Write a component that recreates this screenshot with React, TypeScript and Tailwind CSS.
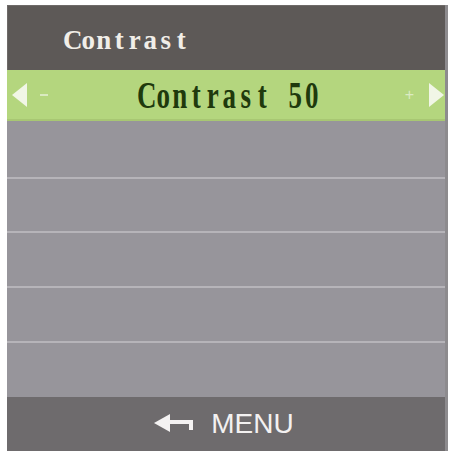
import React from "react";

const serif = { fontFamily: '"Liberation Serif", "Times New Roman", serif' };
const sans = { fontFamily: '"Liberation Sans", Arial, sans-serif' };

// Fixed-cell text: every character sits in its own equal-width cell,
// like the character generator of an on-screen display.
function CellText({
  text,
  cell,
  glyph,
}: {
  text: string;
  cell: string;
  glyph: string;
}) {
  return (
    <span className="inline-flex" style={serif}>
      {text.split("").map((ch, i) => (
        <span key={i} className={`inline-flex justify-center ${cell}`}>
          <span className={`inline-block ${glyph}`}>{ch === " " ? "\u00a0" : ch}</span>
        </span>
      ))}
    </span>
  );
}

function BlankRow({ h, line = true }: { h: string; line?: boolean }) {
  return (
    <div className="flex flex-col">
      <div className={`${h} bg-[#97959b]`} />
      {line && <div className="h-[2px] bg-[#b6b4b9]" />}
    </div>
  );
}

function BackArrow() {
  return (
    <svg width="40" height="20" viewBox="0 0 40 20" className="block">
      <path d="M0 9 L16 0 L16 18 Z" fill="#f4f2f2" />
      <path d="M14 8 H37 V16" fill="none" stroke="#f4f2f2" strokeWidth="4" />
    </svg>
  );
}

export default function App() {
  return (
    <div className="w-[451px] h-[451px] bg-white pl-[7px] pr-[3px] pt-[5px] overflow-hidden">
      <div className="flex flex-col h-[446px] border-r-[3px] border-[#8d8b8e] bg-[#97959b]">
        {/* title bar */}
        <div className="h-[65px] bg-[#5d5957] flex items-center pl-[57px] pt-[3px] border-t border-l border-[#6e6a68]">
          <span className="text-[27px] font-bold text-[#f1eee8] leading-none">
            <CellText text="Contrast" cell="w-[15.5px]" glyph="" />
          </span>
        </div>

        {/* selected item */}
        <div className="h-[51px] bg-[#b4d67e] flex items-center justify-between pl-[5px] pr-[1px] border-b-2 border-[#a8c773]">
          <div className="flex items-center gap-[12px]">
            <svg width="16" height="24" viewBox="0 0 16 24" className="block">
              <path d="M0 12 L15 0 L15 24 Z" fill="#f1f6e6" />
            </svg>
            <span className="block w-[8px] h-[2px] bg-[#d9eac0]" />
          </div>
          <span className="text-[27px] font-bold text-[#1f3a0d] leading-none ml-[6px] mt-[2px]">
            <CellText text="Contrast 50" cell="w-[16.5px]" glyph="scale-y-[1.4]" />
          </span>
          <div className="flex items-center gap-[15px]">
            <span className="text-[16px] text-[#dbebc3] leading-none" style={sans}>+</span>
            <svg width="15" height="24" viewBox="0 0 15 24" className="block">
              <path d="M15 12 L0 0 L0 24 Z" fill="#f1f6e6" />
            </svg>
          </div>
        </div>

        {/* empty rows */}
        <div className="flex flex-col">
          <BlankRow h="h-[56px]" />
          <BlankRow h="h-[52px]" />
          <BlankRow h="h-[53px]" />
          <BlankRow h="h-[53px]" />
          <BlankRow h="h-[54px]" line={false} />
        </div>

        {/* footer */}
        <div className="flex-1 bg-[#6e6b6d] flex items-center justify-center gap-[17px] pr-[4px]">
          <BackArrow />
          <span className="text-[28px] text-[#f3f1f1] leading-none" style={sans}>
            MENU
          </span>
        </div>
      </div>
    </div>
  );
}
